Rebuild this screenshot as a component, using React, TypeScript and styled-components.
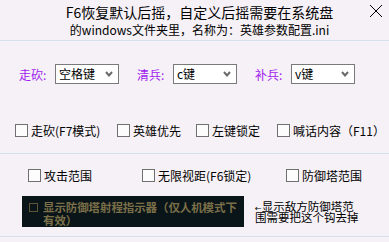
import React from "react";
import styled, { createGlobalStyle } from "styled-components";

const GlobalStyle = createGlobalStyle`
  * { box-sizing: border-box; }
  html, body { margin: 0; padding: 0; background: #f6f1f6; }
  body {
    font-family: "Noto Sans CJK SC", "Noto Sans", sans-serif;
    color: #000;
  }
`;

const Page = styled.div`
  width: 389px;
  height: 242px;
  display: flex;
  flex-direction: column;
  background: #f6f1f6;
  overflow: hidden;
`;

const Header = styled.header`
  position: relative;
  height: 41px;
  border-bottom: 1px solid #d3e1ec;
  padding: 3px 0 0 10px;
  text-align: center;
`;

const TitleLine = styled.div<{ $size: number; $lh: number }>`
  font-size: ${(p) => p.$size}px;
  line-height: ${(p) => p.$lh}px;
  white-space: nowrap;
  & + & { margin-top: 1px; }
`;

const CloseButton = styled.button`
  position: absolute;
  right: 6px;
  top: 4px;
  width: 14px;
  height: 14px;
  padding: 0;
  border: 0;
  background: transparent;
  display: flex;
`;

const Section = styled.section<{ $h: number; $pt: number }>`
  height: ${(p) => p.$h}px;
  padding-top: ${(p) => p.$pt}px;
  border-bottom: 1px solid #d3e1ec;
  display: flex;
  flex-direction: column;
`;

const KeyRow = styled.div`
  display: flex;
  align-items: center;
  padding-left: 19px;
  gap: 18px;
  height: 20px;
`;

const KeyGroup = styled.div`
  display: flex;
  align-items: center;
  gap: 5px;
`;

const KeyLabel = styled.span`
  color: #a020f0;
  font-size: 12px;
  width: 31px;
  white-space: nowrap;
`;

const SelectBox = styled.div`
  width: 64px;
  height: 20px;
  border: 1px solid #7a7a7a;
  background: #fff;
  display: flex;
  align-items: center;
  justify-content: space-between;
  padding: 0 5px 0 3px;
  font-size: 12px;
  line-height: 18px;
`;

const CheckRow = styled.div<{ $cols: string; $pl: number; $mt: number }>`
  display: grid;
  grid-template-columns: ${(p) => p.$cols};
  padding-left: ${(p) => p.$pl}px;
  margin-top: ${(p) => p.$mt}px;
  height: 13px;
  align-items: center;
`;

const CheckItem = styled.label`
  display: flex;
  align-items: center;
  gap: 3px;
  font-size: 12px;
  line-height: 13px;
  white-space: nowrap;
`;

const Box = styled.span`
  width: 13px;
  height: 13px;
  border: 1px solid #707070;
  background: #fcfcfc;
  flex: none;
`;

const BottomRow = styled.div`
  display: flex;
  align-items: flex-start;
  padding-left: 22px;
  margin-top: 14px;
  gap: 11px;
`;

const DarkPanel = styled.div`
  width: 222px;
  height: 31px;
  background: #0a1519;
  display: flex;
  align-items: flex-start;
  padding: 5px 0 0 7px;
  gap: 5px;
`;

const DarkBox = styled.span`
  width: 9px;
  height: 9px;
  border: 1px solid #5e5535;
  flex: none;
  margin-top: 2px;
`;

const DarkText = styled.div`
  display: flex;
  flex-direction: column;
  color: #7a6f48;
  font-size: 11.5px;
  font-weight: bold;
  letter-spacing: -0.1px;
  white-space: nowrap;
`;

const DarkLine = styled.div`
  height: 13px;
  line-height: 13px;
`;

const Note = styled.div`
  display: flex;
  flex-direction: column;
  font-size: 11.5px;
  margin-top: 5px;
  white-space: nowrap;
`;

const NoteLine = styled.div`
  height: 11px;
  line-height: 11px;
`;

const Arrow = styled.span`
  font-family: "DejaVu Sans", sans-serif;
  font-size: 8px;
  letter-spacing: 0;
`;

const Chevron = () => (
  <svg width="8" height="6" viewBox="0 0 8 6">
    <path d="M1 1 L4 4.5 L7 1" stroke="#6a6a6a" strokeWidth="2" fill="none" />
  </svg>
);

const Select = ({ value }: { value: string }) => (
  <SelectBox>
    <span>{value}</span>
    <Chevron />
  </SelectBox>
);

const Check = ({ label }: { label: string }) => (
  <CheckItem>
    <Box />
    <span>{label}</span>
  </CheckItem>
);

export default function App() {
  return (
    <Page>
      <GlobalStyle />
      <Header>
        <TitleLine $size={14} $lh={18}>F6恢复默认后摇，自定义后摇需要在系统盘</TitleLine>
        <TitleLine $size={12} $lh={15}>的windows文件夹里，名称为：英雄参数配置.ini</TitleLine>
        <CloseButton aria-label="close">
          <svg width="14" height="14" viewBox="0 0 14 14">
            <path d="M1 1 L13 13 M13 1 L1 13" stroke="#000" strokeWidth="1" />
          </svg>
        </CloseButton>
      </Header>
      <Section $h={113} $pt={23}>
        <KeyRow>
          <KeyGroup>
            <KeyLabel>走砍:</KeyLabel>
            <Select value="空格键" />
          </KeyGroup>
          <KeyGroup>
            <KeyLabel>清兵:</KeyLabel>
            <Select value="c键" />
          </KeyGroup>
          <KeyGroup>
            <KeyLabel>补兵:</KeyLabel>
            <Select value="v键" />
          </KeyGroup>
        </KeyRow>
        <CheckRow $cols="102px 79px 81px auto" $pl={15} $mt={40}>
          <Check label="走砍(F7模式)" />
          <Check label="英雄优先" />
          <Check label="左键锁定" />
          <Check label="喊话内容（F11）" />
        </CheckRow>
      </Section>
      <Section $h={83} $pt={15}>
        <CheckRow $cols="114px 144px auto" $pl={28} $mt={0}>
          <Check label="攻击范围" />
          <Check label="无限视距(F6锁定)" />
          <Check label="防御塔范围" />
        </CheckRow>
        <BottomRow>
          <DarkPanel>
            <DarkBox />
            <DarkText>
              <DarkLine>显示防御塔射程指示器（仅人机模式下</DarkLine>
              <DarkLine>有效）</DarkLine>
            </DarkText>
          </DarkPanel>
          <Note>
            <NoteLine>
              <Arrow>←</Arrow>显示敌方防御塔范
            </NoteLine>
            <NoteLine>围需要把这个钩去掉</NoteLine>
          </Note>
        </BottomRow>
      </Section>
    </Page>
  );
}
